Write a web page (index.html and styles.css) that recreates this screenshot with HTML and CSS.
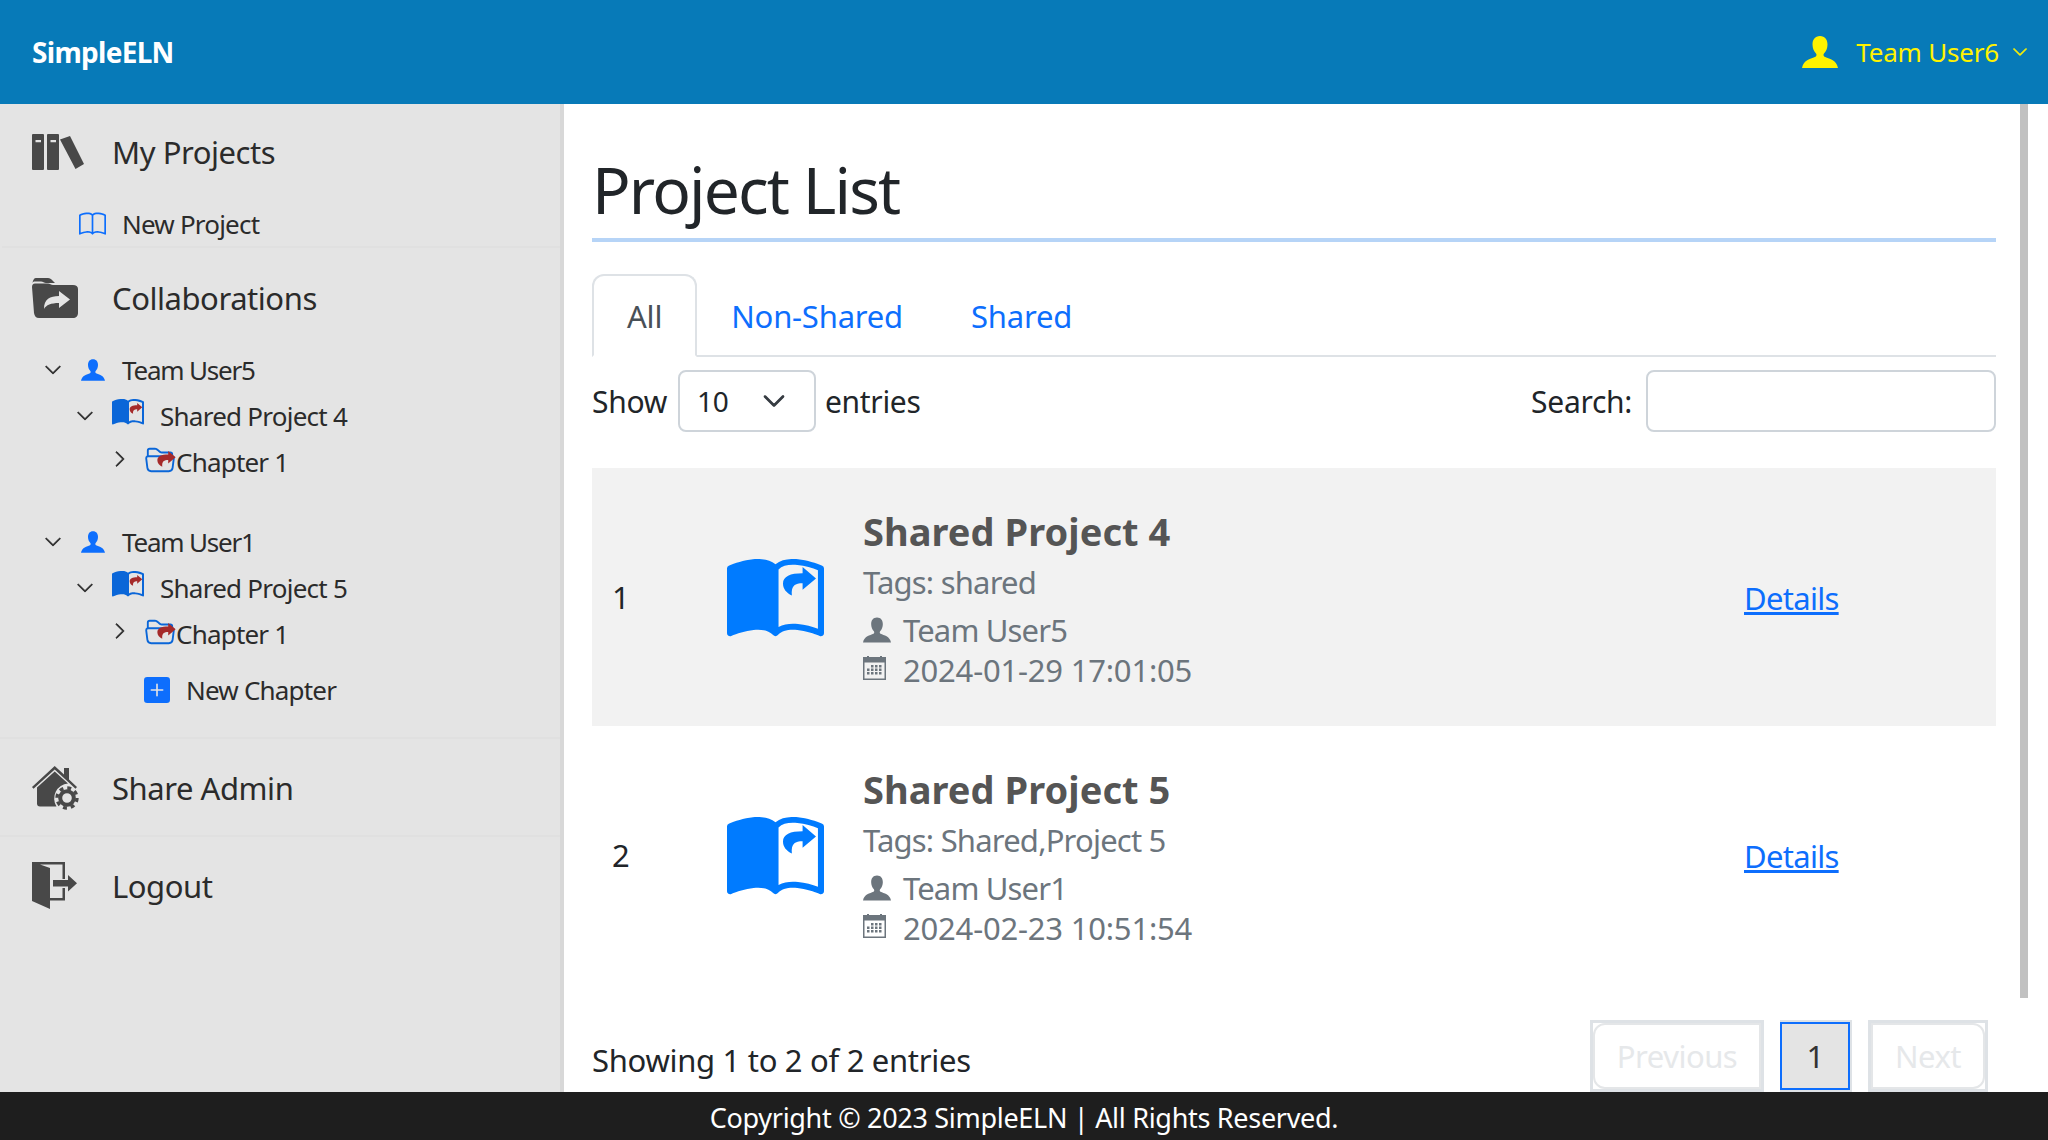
FILE: index.html
```html
<!DOCTYPE html>
<html lang="en">
<head>
<meta charset="utf-8">
<title>SimpleELN</title>
<link rel="stylesheet" href="styles.css">
</head>
<body>
<svg class="sprite" aria-hidden="true">
  <symbol id="chev-d" viewBox="0 0 16 16"><path fill="currentColor" stroke="currentColor" stroke-width=".8" d="M1.646 4.646a.5.5 0 0 1 .708 0L8 10.293l5.646-5.647a.5.5 0 0 1 .708.708l-6 6a.5.5 0 0 1-.708 0l-6-6a.5.5 0 0 1 0-.708z"/></symbol>
  <symbol id="chev-r" viewBox="0 0 16 16"><path fill="currentColor" stroke="currentColor" stroke-width=".8" d="M4.646 1.646a.5.5 0 0 1 .708 0l6 6a.5.5 0 0 1 0 .708l-6 6a.5.5 0 0 1-.708-.708L10.293 8 4.646 2.354a.5.5 0 0 1 0-.708z"/></symbol>
  <symbol id="user" viewBox="0 0 36 32"><path fill="currentColor" d="M18 0c-5 0-7.500 3.600-7.500 8.500 0 3.800 1.500 7 3.500 9 .8 1 .6 2.500-.5 3.200C9 23 1.500 23.500 0 32h36c-1.500-8.500-9-9-13.500-11.300-1.100-.7-1.300-2.200-.5-3.200 2-2 3.500-5.200 3.500-9C25.500 3.600 23 0 18 0z"/></symbol>
  <symbol id="book" viewBox="0 0 16 16"><path fill="currentColor" d="M1 2.828c.885-.37 2.154-.769 3.388-.893 1.33-.134 2.458.063 3.112.752v9.746c-.935-.53-2.12-.603-3.213-.493-1.18.12-2.37.461-3.287.811V2.828zm7.500-.141c.654-.689 1.782-.886 3.112-.752 1.234.124 2.503.523 3.388.893v9.923c-.918-.35-2.107-.692-3.287-.81-1.094-.111-2.278-.039-3.213.492V2.687zM8 1.783C7.015.936 5.587.81 4.287.94c-1.514.153-3.042.672-3.994 1.105A.5.5 0 0 0 0 2.500v11a.5.5 0 0 0 .707.455c.882-.4 2.303-.881 3.680-1.020 1.409-.142 2.590.087 3.223.877a.5.5 0 0 0 .78 0c.633-.79 1.814-1.019 3.222-.877 1.378.139 2.800.620 3.681 1.020A.5.5 0 0 0 16 13.500v-11a.5.5 0 0 0-.293-.455c-.952-.433-2.480-.952-3.994-1.105C10.413.809 8.985.936 8 1.783z"/></symbol>
  <symbol id="book-half" viewBox="0 .9 16 13.400" preserveAspectRatio="none"><path fill="currentColor" d="M8.500 2.687c.654-.689 1.782-.886 3.112-.752 1.234.124 2.503.523 3.388.893v9.923c-.918-.35-2.107-.692-3.287-.81-1.094-.111-2.278-.039-3.213.492V2.687zM8 1.783C7.015.936 5.587.81 4.287.94c-1.514.153-3.042.672-3.994 1.105A.5.5 0 0 0 0 2.500v11a.5.5 0 0 0 .707.455c.882-.4 2.303-.881 3.680-1.020 1.409-.142 2.590.087 3.223.877a.5.5 0 0 0 .78 0c.633-.79 1.814-1.019 3.222-.877 1.378.139 2.800.620 3.681 1.020A.5.5 0 0 0 16 13.500v-11a.5.5 0 0 0-.293-.455c-.952-.433-2.480-.952-3.994-1.105C10.413.809 8.985.936 8 1.783z"/></symbol>
  <symbol id="share" viewBox="0 0 16 14"><path fill="currentColor" d="M9.500 0 16 5.500 9.500 11V7.800C6 7.800 3.800 8.800 4.300 13.800 1.500 12.500 0 10.500 0 8 0 4.500 3.500 3 9.500 3V0z"/></symbol>
  <symbol id="folder" viewBox="0 0 16 16"><path fill="currentColor" d="M1 3.500A1.500 1.500 0 0 1 2.500 2h2.764c.958 0 1.760.56 2.311 1.184C7.985 3.648 8.480 4 9 4h4.500A1.500 1.500 0 0 1 15 5.500v.64c.57.265.94.876.856 1.546l-.64 5.124A2.500 2.500 0 0 1 12.733 15H3.266a2.500 2.500 0 0 1-2.481-2.190l-.64-5.124A1.500 1.500 0 0 1 1 6.140V3.500zM2 6h12v-.5a.5.5 0 0 0-.5-.5H9c-.964 0-1.710-.629-2.174-1.154C6.374 3.334 5.820 3 5.264 3H2.500a.5.5 0 0 0-.5.5V6zm-.367 1a.5.5 0 0 0-.496.562l.64 5.124A1.500 1.500 0 0 0 3.266 14h9.468a1.500 1.500 0 0 0 1.489-1.314l.64-5.124A.5.5 0 0 0 14.367 7H1.633z"/></symbol>
  <symbol id="plus" viewBox="0 0 16 16"><path fill="currentColor" d="M2 0a2 2 0 0 0-2 2v12a2 2 0 0 0 2 2h12a2 2 0 0 0 2-2V2a2 2 0 0 0-2-2H2zm6.500 4.500v3h3a.5.5 0 0 1 0 1h-3v3a.5.5 0 0 1-1 0v-3h-3a.5.5 0 0 1 0-1h3v-3a.5.5 0 0 1 1 0z"/></symbol>
  <symbol id="books" viewBox="0 0 52 36"><path fill="currentColor" fill-rule="evenodd" d="M1 0h10a1 1 0 0 1 1 1v34a1 1 0 0 1-1 1H1a1 1 0 0 1-1-1V1a1 1 0 0 1 1-1zm2.500 6v2.300h5.500V6H3.500zM16 0h10a1 1 0 0 1 1 1v34a1 1 0 0 1-1 1H16a1 1 0 0 1-1-1V1a1 1 0 0 1 1-1zm2.500 6v2.300H24V6h-5.500zM28 5.500 38 2l14 28-8.500 5L28 5.500z"/></symbol>
  <symbol id="folder-share" viewBox="0 0 46 40"><path fill="currentColor" fill-rule="evenodd" d="M4 0h12c2 0 3 1 4 2l3 3h-9c-2 0-3-1.500-5-1.500H4C2.500 3.500 1.500 3 .5 5 1 2 2 0 4 0zM3 5.500h13c2 0 3 1.500 5 1.500h20c3 0 5 1.500 5 4v24c0 3-2 5-5 5H7c-3 0-4.500-2-5-5L0 9c0-2 1-3.500 3-3.500zM27 13v5c-9 0-15 3-15 13 2-4 7-6 15-6v5l11-8.500L27 13z"/></symbol>
  <symbol id="house" viewBox="0 0 47 44"><path fill="currentColor" d="M0 21 22.700 0 32 8.500V2h5v11.500l8 7.500-1.500 1.700L22.700 3.500 1.500 22.700 0 21z"/><path fill="currentColor" d="M5 21.500 22.700 5.500 36 17.500A15 15 0 0 0 24.500 40.500H8c-2 0-3-1.200-3-3V21.500z"/><circle cx="35" cy="32" r="6.800" fill="none" stroke="currentColor" stroke-width="4"/><circle cx="35" cy="32" r="10" fill="none" stroke="currentColor" stroke-width="3.400" stroke-dasharray="3.900 3.950"/></symbol>
  <symbol id="door" viewBox="0 0 46 48"><path fill="currentColor" d="M0 0h33v17h-2.500V2.500H8L18 6v41L0 39V0z"/><path fill="currentColor" d="M30.500 26H33v12.500H18V36h12.500V26z"/><path fill="currentColor" d="M21 18h15v-5l9 8.300-9 8.200v-5H21V18z"/></symbol>
  <symbol id="calendar" viewBox="0 0 23 24"><path fill="currentColor" fill-rule="evenodd" d="M0 1h4V0h2v1h11V0h2v1h4v23H0V1zm1.500 5.500v16h20v-16h-20z"/><path fill="currentColor" d="M8 9h2.500v2.500H8zM12 9h2.500v2.500H12zM16 9h2.500v2.500H16zM4 12.500h2.500V15H4zM8 12.500h2.500V15H8zM12 12.500h2.500V15H12zM16 12.500h2.500V15H16zM4 16h2.500v2.500H4zM8 16h2.500v2.500H8zM12 16h2.500v2.500H12zM16 16h2.500v2.500H16z"/></symbol>
</svg>

<header class="topbar">
  <a class="brand">SimpleELN</a>
  <div class="account">
    <svg class="account-icon"><use href="#user"/></svg>
    <span class="account-name">Team User6</span>
    <svg class="account-chev"><use href="#chev-d"/></svg>
  </div>
</header>

<div class="middle">
  <nav class="sidebar">
    <div class="head head-first">
      <svg class="head-icon books"><use href="#books"/></svg><span>My Projects</span>
    </div>
    <div class="sub new-project">
      <svg class="i-new-book"><use href="#book"/></svg><span>New Project</span>
    </div>
    <div class="head head-collab">
      <svg class="head-icon fshare"><use href="#folder-share"/></svg><span>Collaborations</span>
    </div>

    <div class="tree tree-first">
      <div class="node user-node">
        <svg class="chev"><use href="#chev-d"/></svg>
        <svg class="i-user"><use href="#user"/></svg><span>Team User5</span>
      </div>
      <div class="node project-node">
        <svg class="chev"><use href="#chev-d"/></svg>
        <span class="shared-book"><svg class="i-book"><use href="#book-half"/></svg><svg class="i-book-share"><use href="#share"/></svg></span>
        <span>Shared Project 4</span>
      </div>
      <div class="node chapter-node">
        <svg class="chev"><use href="#chev-r"/></svg>
        <span class="shared-folder"><svg class="i-folder"><use href="#folder"/></svg><svg class="i-folder-share"><use href="#share"/></svg></span>
        <span>Chapter 1</span>
      </div>
    </div>

    <div class="tree tree-second">
      <div class="node user-node">
        <svg class="chev"><use href="#chev-d"/></svg>
        <svg class="i-user"><use href="#user"/></svg><span>Team User1</span>
      </div>
      <div class="node project-node">
        <svg class="chev"><use href="#chev-d"/></svg>
        <span class="shared-book"><svg class="i-book"><use href="#book-half"/></svg><svg class="i-book-share"><use href="#share"/></svg></span>
        <span>Shared Project 5</span>
      </div>
      <div class="node chapter-node">
        <svg class="chev"><use href="#chev-r"/></svg>
        <span class="shared-folder"><svg class="i-folder"><use href="#folder"/></svg><svg class="i-folder-share"><use href="#share"/></svg></span>
        <span>Chapter 1</span>
      </div>
      <div class="node new-chapter">
        <svg class="i-plus"><use href="#plus"/></svg><span>New Chapter</span>
      </div>
    </div>

    <div class="head head-admin">
      <svg class="head-icon house"><use href="#house"/></svg><span>Share Admin</span>
    </div>
    <div class="head head-logout">
      <svg class="head-icon door"><use href="#door"/></svg><span>Logout</span>
    </div>
  </nav>

  <main class="content">
    <h1 class="title">Project List</h1>
    <ul class="tabs">
      <li class="tab tab-active">All</li>
      <li class="tab">Non-Shared</li>
      <li class="tab">Shared</li>
    </ul>
    <div class="controls">
      <label class="length">Show
        <span class="select"><span>10</span><svg class="select-chev"><use href="#chev-d"/></svg></span>
        entries</label>
      <label class="search">Search:<span class="search-input"></span></label>
    </div>

    <div class="row row-odd">
      <div class="cell-index">1</div>
      <div class="cell-icon">
        <svg class="big-book"><use href="#book-half"/></svg><svg class="big-share"><use href="#share"/></svg>
      </div>
      <div class="cell-info">
        <div class="p-title">Shared Project 4</div>
        <div class="p-tags">Tags: shared</div>
        <div class="p-user"><svg class="meta-user"><use href="#user"/></svg>Team User5</div>
        <div class="p-date"><svg class="meta-cal"><use href="#calendar"/></svg>2024-01-29 17:01:05</div>
      </div>
      <a class="details">Details</a>
    </div>

    <div class="row">
      <div class="cell-index">2</div>
      <div class="cell-icon">
        <svg class="big-book"><use href="#book-half"/></svg><svg class="big-share"><use href="#share"/></svg>
      </div>
      <div class="cell-info">
        <div class="p-title">Shared Project 5</div>
        <div class="p-tags">Tags: Shared,Project 5</div>
        <div class="p-user"><svg class="meta-user"><use href="#user"/></svg>Team User1</div>
        <div class="p-date"><svg class="meta-cal"><use href="#calendar"/></svg>2024-02-23 10:51:54</div>
      </div>
      <a class="details">Details</a>
    </div>

    <div class="table-foot">
      <div class="info">Showing 1 to 2 of 2 entries</div>
      <div class="pager">
        <span class="page-box page-prev"><span class="page-inner">Previous</span></span>
        <span class="page-box page-cur"><span class="page-inner">1</span></span>
        <span class="page-box page-next"><span class="page-inner">Next</span></span>
      </div>
    </div>
  </main>
  <div class="scroll-track"><div class="scroll-thumb"></div></div>
</div>

<footer class="footer">Copyright © 2023 SimpleELN | All Rights Reserved.</footer>
</body>
</html>
```

FILE: styles.css
```css
* { box-sizing: border-box; }
html, body { margin: 0; height: 100%; }
body {
  display: flex;
  flex-direction: column;
  height: 1140px;
  overflow: hidden;
  font-family: "Noto Sans", "Open Sans", sans-serif;
  color: #212529;
  background: #fff;
}
.sprite { position: absolute; width: 0; height: 0; overflow: hidden; }
svg { display: block; flex: none; }

.topbar {
  flex: none;
  height: 104px;
  background: #077ab8;
  display: flex;
  align-items: center;
  justify-content: space-between;
  padding: 0 20px 0 32px;
}
.brand { color: #fff; font-weight: 700; font-size: 28px; letter-spacing: -.7px; }
.account { display: flex; align-items: center; color: #fff200; }
.account-icon { width: 36px; height: 32px; margin-right: 18px; }
.account-name { font-size: 26px; letter-spacing: -.2px; }
.account-chev { width: 16px; height: 16px; margin-left: 13px; }

.middle { flex: 1; min-height: 0; display: flex; }

.sidebar {
  flex: none;
  width: 564px;
  background: #e4e4e4;
  border-right: 4px solid #d8d8d8;
  color: #2b2b2b;
  font-size: 26px;
  letter-spacing: -.8px;
}
.head {
  display: flex;
  align-items: center;
  font-size: 31px;
  letter-spacing: -.45px;
  padding-left: 32px;
}
.head-icon { color: #484848; }
.head-first { height: 96px; }
.books { width: 52px; height: 36px; margin-right: 28px; }
.new-project {
  display: flex;
  align-items: center;
  height: 48px;
  margin-left: 2px;
  padding: 2px 0 0 77px;
  border-bottom: 2px solid #e0e0e0;
}
.i-new-book { width: 27px; height: 27px; color: #0d6efd; margin-right: 16px; }
.head-collab { height: 100px; }
.fshare { width: 46px; height: 40px; margin-right: 34px; }

.node { display: flex; align-items: center; height: 46px; }
.chev { width: 18px; height: 18px; color: #2b2b2b; }
.user-node { padding-left: 44px; letter-spacing: -1.2px; }
.user-node .chev { margin-right: 19px; }
.i-user { width: 24px; height: 22px; color: #0d6efd; margin-right: 17px; }
.project-node { padding-left: 76px; letter-spacing: -.75px; }
.project-node .chev { margin-right: 18px; }
.shared-book { position: relative; width: 32px; height: 26px; margin-right: 16px; margin-top: -8px; }
.i-book { width: 32px; height: 26px; color: #0a66d8; }
.i-book-share { position: absolute; left: 17px; top: 4px; width: 14px; height: 11px; color: #a52a2a; }
.chapter-node { padding-left: 111px; }
.chapter-node .chev { margin-right: 15px; margin-top: -6px; }
.shared-folder { position: relative; width: 32px; height: 30px; margin-top: -6px; }
.i-folder { width: 32px; height: 30px; color: #0a66d8; }
.i-folder-share { position: absolute; left: 13px; top: 7px; width: 19px; height: 16px; color: #a52a2a; }
.tree-first { margin-top: -1px; }
.tree-second { margin-top: 34px; border-bottom: 2px solid #e0e0e0; padding-bottom: 24px; }
.new-chapter { padding-left: 144px; margin-top: 10px; }
.i-plus { width: 26px; height: 26px; color: #0d6efd; margin-right: 16px; }
.head-admin { height: 98px; padding-top: 2px; border-bottom: 2px solid #e0e0e0; }
.head-logout { height: 98px; }
.house { width: 47px; height: 44px; margin-right: 33px; }
.door { width: 46px; height: 48px; margin-right: 34px; }

.content {
  flex: none;
  width: 1404px;
  margin-left: 28px;
  min-height: 0;
  overflow: hidden;
}
.title {
  margin: 0;
  height: 138px;
  padding-top: 45px;
  font-size: 64px;
  line-height: 82px;
  font-weight: 400;
  letter-spacing: -1.85px;
  border-bottom: 4px solid #b6d4f7;
}
.tabs {
  list-style: none;
  margin: 32px 0 0;
  padding: 0;
  display: flex;
  height: 83px;
  border-bottom: 2px solid #dee2e6;
  font-size: 31px;
  letter-spacing: -.2px;
}
.tab {
  color: #0d6efd;
  padding: 0 34px;
  height: 83px;
  line-height: 84px;
}
.tab-active {
  padding: 0 33px;
  line-height: 80px;
  color: #495057;
  background: #fff;
  border: 2px solid #dee2e6;
  border-bottom-color: #fff;
  border-radius: 12px 12px 0 0;
}
.controls {
  display: flex;
  justify-content: space-between;
  align-items: center;
  height: 62px;
  margin-top: 13px;
  font-size: 30px;
  letter-spacing: -.3px;
}
.length { display: flex; align-items: center; }
.select {
  display: flex;
  align-items: center;
  justify-content: space-between;
  width: 138px;
  height: 62px;
  margin: 0 9px 0 11px;
  padding: 0 28px 0 17px;
  border: 2px solid #ced4da;
  border-radius: 8px;
  font-size: 28px;
}
.select-chev { width: 24px; height: 24px; color: #343a40; }
.search { display: flex; align-items: center; }
.search-input {
  display: block;
  width: 350px;
  height: 62px;
  margin-left: 14px;
  border: 2px solid #ced4da;
  border-radius: 8px;
}

.row {
  display: flex;
  align-items: center;
  height: 258px;
  font-size: 31px;
  letter-spacing: -.3px;
}
.controls + .row { margin-top: 36px; }
.row-odd { background: #f2f2f2; }
.cell-index { width: 135px; padding-left: 20px; }
.cell-icon { position: relative; width: 136px; margin-top: 2px; }
.big-book { width: 97px; height: 79px; color: #007bff; }
.big-share { position: absolute; left: 56px; top: 8px; width: 33px; height: 29px; color: #007bff; }
.cell-info { width: 881px; padding-top: 2px; color: #6c757d; }
.p-title { font-size: 38px; line-height: 50px; font-weight: 700; color: #555; letter-spacing: .05px; }
.p-tags { line-height: 46px; margin-top: 2.500px; letter-spacing: -.8px; }
.p-user, .p-date { display: flex; align-items: center; height: 40px; }
.p-user { margin-top: 5.500px; letter-spacing: -.85px; }
.p-date { letter-spacing: -.2px; }
.meta-user { width: 28px; height: 26px; margin-right: 12px; }
.meta-cal { width: 23px; height: 24px; margin-right: 17px; margin-top: -4px; }
.details { color: #0d6efd; text-decoration: underline; letter-spacing: -.7px; margin-top: 2px; }

.table-foot {
  display: flex;
  justify-content: space-between;
  margin-top: 36px;
  font-size: 31px;
  letter-spacing: -.3px;
}
.info { line-height: 80px; }
.pager { display: flex; gap: 16px; margin-right: 8px; letter-spacing: -.5px; }
.page-box {
  display: block;
  height: 72px;
  border: 3px solid #dee2e6;
}
.page-inner {
  display: flex;
  align-items: center;
  justify-content: center;
  height: 100%;
  padding: 0 24px;
  border: 2px solid #e4e6e8;
  color: #e6e8ea;
}
.page-prev { width: 174px; }
.page-prev .page-inner { border-radius: 12px 0 0 12px; }
.page-next { width: 120px; }
.page-next .page-inner { border-radius: 0 12px 12px 0; }
.page-cur { width: 72px; border-width: 2px 2px 2px 0; }
.page-cur .page-inner { background: #e4e4e4; border: 2px solid #0d6efd; color: #333; padding: 0; }

.scroll-track { flex: none; width: 8px; margin-left: 24px; }
.scroll-thumb { height: 894px; background: #c1c1c1; }

.footer {
  flex: none;
  height: 48px;
  background: #1e1e1e;
  color: #fff;
  text-align: center;
  font-size: 27px;
  line-height: 52px;
  letter-spacing: -.3px;
}
```
